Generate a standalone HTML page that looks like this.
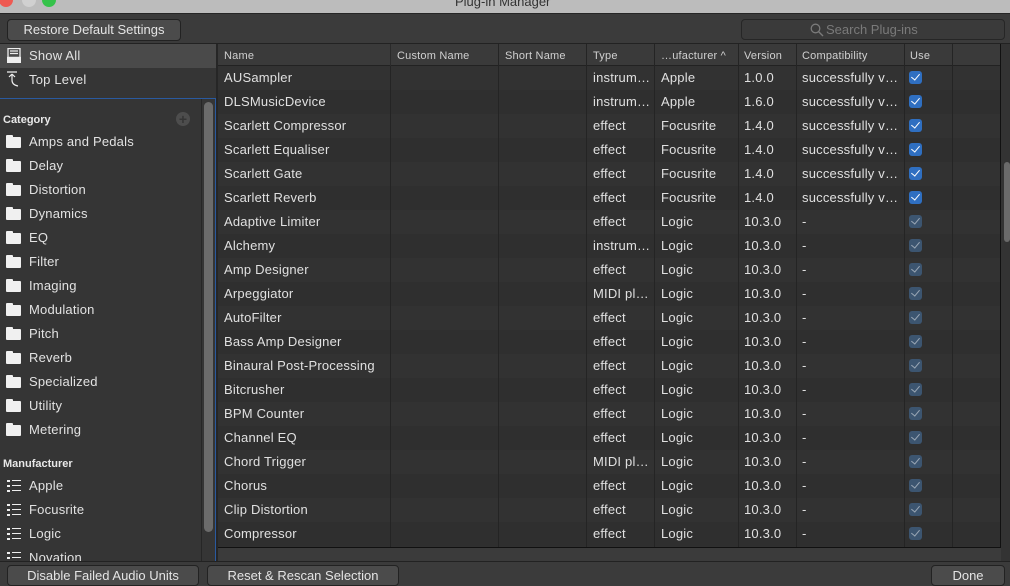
<!DOCTYPE html>
<html><head><meta charset="utf-8"><style>
*{margin:0;padding:0;box-sizing:border-box}
body{width:1010px;height:586px;overflow:hidden;background:#3b3b3b;font-family:"Liberation Sans",sans-serif;color:#dedede;position:relative;font-size:13px}
.abs{position:absolute}
.title{left:0;top:0;width:1010px;height:14px;background:#bcbcbc;border-bottom:1px solid #262626}
.title span{position:absolute;left:455px;top:-6px;color:#333;font-size:13px}
.dot{width:14px;height:14px;border-radius:50%;top:-7px}
.btn{background:#4b4b4b;border:1px solid #222;border-radius:4px;color:#e4e4e4;font-size:13px;text-align:center;line-height:20px;height:22px}
.search{left:741px;top:19px;width:264px;height:21px;border:1px solid #262626;border-radius:4px;background:#3a3a3a;color:#7a7a7a;font-size:13px;line-height:19px;padding-left:84px}
.side{left:0;top:44px;width:216px;height:518px;background:#353535}
.sitem{position:absolute;left:0;width:216px;height:24px;line-height:24px;padding-left:29px;font-size:13px;color:#e2e2e2;letter-spacing:0.2px}
.hdr{position:absolute;left:3px;font-weight:bold;font-size:11px;color:#e8e8e8}
.fold{position:absolute;left:6px;width:15px;height:11px;background:#f0f0f0;border-radius:1px}
.fold:before{content:"";position:absolute;left:0;top:-2px;width:7px;height:3px;background:#f0f0f0;border-radius:1px 1px 0 0}
.list{position:absolute;left:7px;width:14px;height:12px}
.list i{position:absolute;left:0;width:3px;height:2px;background:#eee}
.list b{position:absolute;left:5px;width:9px;height:1px;background:#eee}
.tbl{left:218px;top:44px;width:783px;height:504px;background:#303030;border-right:1px solid #111;border-bottom:1px solid #111;overflow:hidden}
.th{position:absolute;top:0;height:22px;background:#3a3a3a;border-bottom:1px solid #222;width:783px}
.th span{position:absolute;top:6px;font-size:11px;color:#d0d0d0;letter-spacing:0.2px}
.vl{position:absolute;top:0;width:1px;height:504px;background:#242424}
.row{position:absolute;left:0;width:783px;height:24px;line-height:24px;font-size:13px;color:#e0e0e0;letter-spacing:0.2px}
.row.a{background:#323232}.row.b{background:#2f2f2f}
.row span{position:absolute;top:0;white-space:nowrap}
.cb{position:absolute;left:691px;top:5px;width:13px;height:13px;border-radius:3px;background:#2f6fc1}
.cb:after{content:"";position:absolute;left:4px;top:1px;width:4px;height:7px;border:solid #fff;border-width:0 1.6px 1.6px 0;transform:rotate(40deg)}
.cb.d{background:#3c5570}.cb.d:after{border-color:#9aa7b5}
</style></head><body>
<div class="abs title"><div class="abs dot" style="left:-1px;background:#ee5a52"></div><div class="abs dot" style="left:22px;background:#d0d0d0"></div><div class="abs dot" style="left:42px;background:#35c24a"></div><span>Plug-in Manager</span></div>
<div class="abs btn" style="left:7px;top:19px;width:174px">Restore Default Settings</div>
<div class="abs search"><svg class="abs" style="left:68px;top:3px" width="14" height="14" viewBox="0 0 14 14"><circle cx="5.5" cy="5.5" r="4.3" stroke="#7a7a7a" stroke-width="1.3" fill="none"/><path d="M8.7 8.7L13 13" stroke="#7a7a7a" stroke-width="1.4"/></svg>Search Plug-ins</div>
<div class="abs" style="left:0;top:43px;width:1010px;height:1px;background:#222"></div>

<div class="abs side">
 <div class="sitem" style="top:0;background:#4a4a4a">Show All</div>
 <svg class="abs" style="left:7px;top:4px" width="14" height="15" viewBox="0 0 14 15"><rect x="1" y="0.5" width="12" height="9" fill="none" stroke="#eee" stroke-width="1.3"/><path d="M3 3h8M3 5.5h8M0 9.5h14v5H0z" stroke="#eee" fill="#eee" stroke-width="1.2"/></svg>
 <div class="sitem" style="top:24px">Top Level</div>
 <svg class="abs" style="left:7px;top:27px" width="14" height="16" viewBox="0 0 14 16"><path d="M0 1h10M5 3l-3 3M5 3l3 3M5 3v6q0 5 6 6" stroke="#eee" fill="none" stroke-width="1.2"/></svg>
 <div class="abs" style="left:0;top:54px;width:216px;height:464px;border:1px solid #2a5aa0;border-left:none;overflow:hidden">
  <div class="abs" style="left:204px;top:3px;width:9px;height:430px;border-radius:5px;background:#6b6b6b"></div>
  <div class="abs" style="left:201px;top:0;width:1px;height:464px;background:#262626"></div>
  <div class="abs" style="left:176px;top:13px;width:14px;height:14px;border-radius:50%;background:#4d4d4d;color:#353535;font-size:14px;line-height:14px;text-align:center;font-weight:bold">+</div>
  <div class="hdr" style="top:15px">Category</div>
  <div class="sitem" style="top:31px">Amps and Pedals</div><div class="fold" style="top:38px"></div>
  <div class="sitem" style="top:55px">Delay</div><div class="fold" style="top:62px"></div>
  <div class="sitem" style="top:79px">Distortion</div><div class="fold" style="top:86px"></div>
  <div class="sitem" style="top:103px">Dynamics</div><div class="fold" style="top:110px"></div>
  <div class="sitem" style="top:127px">EQ</div><div class="fold" style="top:134px"></div>
  <div class="sitem" style="top:151px">Filter</div><div class="fold" style="top:158px"></div>
  <div class="sitem" style="top:175px">Imaging</div><div class="fold" style="top:182px"></div>
  <div class="sitem" style="top:199px">Modulation</div><div class="fold" style="top:206px"></div>
  <div class="sitem" style="top:223px">Pitch</div><div class="fold" style="top:230px"></div>
  <div class="sitem" style="top:247px">Reverb</div><div class="fold" style="top:254px"></div>
  <div class="sitem" style="top:271px">Specialized</div><div class="fold" style="top:278px"></div>
  <div class="sitem" style="top:295px">Utility</div><div class="fold" style="top:302px"></div>
  <div class="sitem" style="top:319px">Metering</div><div class="fold" style="top:326px"></div>
  <div class="hdr" style="top:359px">Manufacturer</div>
  <div class="sitem" style="top:375px">Apple</div><div class="list" style="top:381px"><i style="top:0"></i><b style="top:0"></b><i style="top:5px"></i><b style="top:5px"></b><i style="top:10px"></i><b style="top:10px"></b></div>
  <div class="sitem" style="top:399px">Focusrite</div><div class="list" style="top:405px"><i style="top:0"></i><b style="top:0"></b><i style="top:5px"></i><b style="top:5px"></b><i style="top:10px"></i><b style="top:10px"></b></div>
  <div class="sitem" style="top:423px">Logic</div><div class="list" style="top:429px"><i style="top:0"></i><b style="top:0"></b><i style="top:5px"></i><b style="top:5px"></b><i style="top:10px"></i><b style="top:10px"></b></div>
  <div class="sitem" style="top:447px">Novation</div><div class="list" style="top:453px"><i style="top:0"></i><b style="top:0"></b><i style="top:5px"></i><b style="top:5px"></b></div>
 </div>
</div>
<div class="abs" style="left:216px;top:44px;width:2px;height:518px;background:#262626"></div>

<div class="abs tbl">
 <div class="row a" style="top:22px"><span style="left:6px">AUSampler</span><span style="left:375px">instrum…</span><span style="left:443px">Apple</span><span style="left:526px">1.0.0</span><span style="left:584px">successfully v…</span><div class="cb"></div></div>
 <div class="row b" style="top:46px"><span style="left:6px">DLSMusicDevice</span><span style="left:375px">instrum…</span><span style="left:443px">Apple</span><span style="left:526px">1.6.0</span><span style="left:584px">successfully v…</span><div class="cb"></div></div>
 <div class="row a" style="top:70px"><span style="left:6px">Scarlett Compressor</span><span style="left:375px">effect</span><span style="left:443px">Focusrite</span><span style="left:526px">1.4.0</span><span style="left:584px">successfully v…</span><div class="cb"></div></div>
 <div class="row b" style="top:94px"><span style="left:6px">Scarlett Equaliser</span><span style="left:375px">effect</span><span style="left:443px">Focusrite</span><span style="left:526px">1.4.0</span><span style="left:584px">successfully v…</span><div class="cb"></div></div>
 <div class="row a" style="top:118px"><span style="left:6px">Scarlett Gate</span><span style="left:375px">effect</span><span style="left:443px">Focusrite</span><span style="left:526px">1.4.0</span><span style="left:584px">successfully v…</span><div class="cb"></div></div>
 <div class="row b" style="top:142px"><span style="left:6px">Scarlett Reverb</span><span style="left:375px">effect</span><span style="left:443px">Focusrite</span><span style="left:526px">1.4.0</span><span style="left:584px">successfully v…</span><div class="cb"></div></div>
 <div class="row a" style="top:166px"><span style="left:6px">Adaptive Limiter</span><span style="left:375px">effect</span><span style="left:443px">Logic</span><span style="left:526px">10.3.0</span><span style="left:584px">-</span><div class="cb d"></div></div>
 <div class="row b" style="top:190px"><span style="left:6px">Alchemy</span><span style="left:375px">instrum…</span><span style="left:443px">Logic</span><span style="left:526px">10.3.0</span><span style="left:584px">-</span><div class="cb d"></div></div>
 <div class="row a" style="top:214px"><span style="left:6px">Amp Designer</span><span style="left:375px">effect</span><span style="left:443px">Logic</span><span style="left:526px">10.3.0</span><span style="left:584px">-</span><div class="cb d"></div></div>
 <div class="row b" style="top:238px"><span style="left:6px">Arpeggiator</span><span style="left:375px">MIDI pl…</span><span style="left:443px">Logic</span><span style="left:526px">10.3.0</span><span style="left:584px">-</span><div class="cb d"></div></div>
 <div class="row a" style="top:262px"><span style="left:6px">AutoFilter</span><span style="left:375px">effect</span><span style="left:443px">Logic</span><span style="left:526px">10.3.0</span><span style="left:584px">-</span><div class="cb d"></div></div>
 <div class="row b" style="top:286px"><span style="left:6px">Bass Amp Designer</span><span style="left:375px">effect</span><span style="left:443px">Logic</span><span style="left:526px">10.3.0</span><span style="left:584px">-</span><div class="cb d"></div></div>
 <div class="row a" style="top:310px"><span style="left:6px">Binaural Post-Processing</span><span style="left:375px">effect</span><span style="left:443px">Logic</span><span style="left:526px">10.3.0</span><span style="left:584px">-</span><div class="cb d"></div></div>
 <div class="row b" style="top:334px"><span style="left:6px">Bitcrusher</span><span style="left:375px">effect</span><span style="left:443px">Logic</span><span style="left:526px">10.3.0</span><span style="left:584px">-</span><div class="cb d"></div></div>
 <div class="row a" style="top:358px"><span style="left:6px">BPM Counter</span><span style="left:375px">effect</span><span style="left:443px">Logic</span><span style="left:526px">10.3.0</span><span style="left:584px">-</span><div class="cb d"></div></div>
 <div class="row b" style="top:382px"><span style="left:6px">Channel EQ</span><span style="left:375px">effect</span><span style="left:443px">Logic</span><span style="left:526px">10.3.0</span><span style="left:584px">-</span><div class="cb d"></div></div>
 <div class="row a" style="top:406px"><span style="left:6px">Chord Trigger</span><span style="left:375px">MIDI pl…</span><span style="left:443px">Logic</span><span style="left:526px">10.3.0</span><span style="left:584px">-</span><div class="cb d"></div></div>
 <div class="row b" style="top:430px"><span style="left:6px">Chorus</span><span style="left:375px">effect</span><span style="left:443px">Logic</span><span style="left:526px">10.3.0</span><span style="left:584px">-</span><div class="cb d"></div></div>
 <div class="row a" style="top:454px"><span style="left:6px">Clip Distortion</span><span style="left:375px">effect</span><span style="left:443px">Logic</span><span style="left:526px">10.3.0</span><span style="left:584px">-</span><div class="cb d"></div></div>
 <div class="row b" style="top:478px"><span style="left:6px">Compressor</span><span style="left:375px">effect</span><span style="left:443px">Logic</span><span style="left:526px">10.3.0</span><span style="left:584px">-</span><div class="cb d"></div></div>
 <div class="vl" style="left:172px"></div><div class="vl" style="left:280px"></div><div class="vl" style="left:368px"></div><div class="vl" style="left:436px"></div><div class="vl" style="left:520px"></div><div class="vl" style="left:578px"></div><div class="vl" style="left:686px"></div><div class="vl" style="left:734px"></div>
 <div class="th"><span style="left:6px">Name</span><span style="left:179px">Custom Name</span><span style="left:287px">Short Name</span><span style="left:375px">Type</span><span style="left:443px">…ufacturer ^</span><span style="left:526px">Version</span><span style="left:584px">Compatibility</span><span style="left:692px">Use</span>
 <div class="vl" style="left:172px;height:22px;background:#2a2a2a"></div><div class="vl" style="left:280px;height:22px"></div><div class="vl" style="left:368px;height:22px"></div><div class="vl" style="left:436px;height:22px"></div><div class="vl" style="left:520px;height:22px"></div><div class="vl" style="left:578px;height:22px"></div><div class="vl" style="left:686px;height:22px"></div><div class="vl" style="left:734px;height:22px"></div></div>
</div>
<div class="abs" style="left:1001px;top:44px;width:9px;height:518px;background:#333"></div>
<div class="abs" style="left:1004px;top:162px;width:6px;height:80px;border-radius:3px;background:#6a6a6a"></div>
<div class="abs" style="left:0;top:561px;width:1010px;height:1px;background:#222"></div>
<div class="abs btn" style="left:7px;top:565px;width:192px;height:21px;line-height:19px">Disable Failed Audio Units</div>
<div class="abs btn" style="left:207px;top:565px;width:192px;height:21px;line-height:19px">Reset &amp; Rescan Selection</div>
<div class="abs btn" style="left:931px;top:565px;width:74px;height:21px;line-height:19px">Done</div>
</body></html>
